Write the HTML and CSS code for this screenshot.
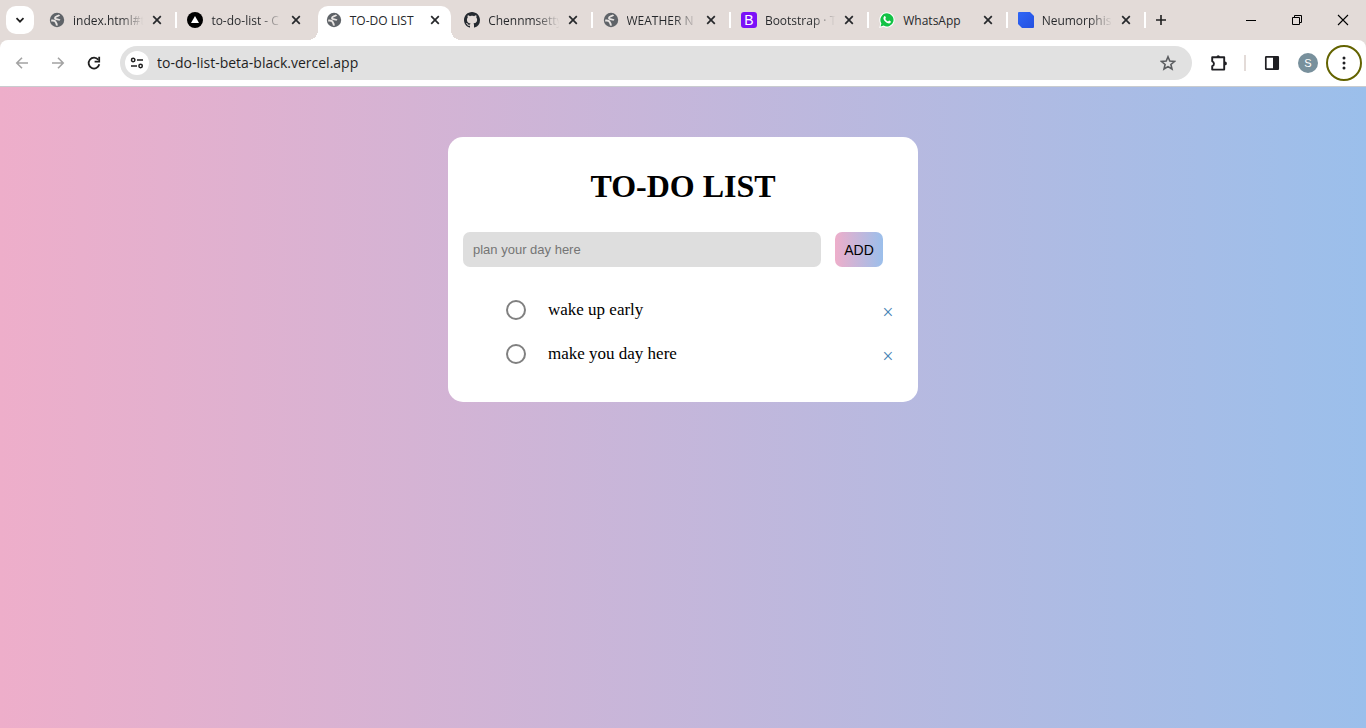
FILE: index.html
```html
<!DOCTYPE html>
<html lang="en">
<head>
<meta charset="utf-8">
<title>TO-DO LIST</title>
<link rel="stylesheet" href="styles.css">
</head>
<body>
<svg class="defs" aria-hidden="true">
  <symbol id="globe" viewBox="0 0 16 16">
    <circle cx="8" cy="8" r="7.200" fill="#5f6368"/>
    <path d="M10.300 2.800C9.500 4.500 6 3.800 6 6c0 2 4.800.6 5.200 2.800M2.200 8.500c2 .2 3.900-.2 4.300 1.300.3 1.300 1.500 1 1.300 3.800" fill="none" stroke="#e8e4e2" stroke-width="1.900"/>
    <path d="M11 7.800l2.700.2c0 2-1.200 3.800-2.600 4.700L9.800 10z" fill="#5f6368"/>
  </symbol>
  <symbol id="x" viewBox="0 0 16 16">
    <path d="M4.200 4.200l7.600 7.600M11.800 4.200l-7.600 7.600" stroke="#26282b" stroke-width="1.700" fill="none"/>
  </symbol>
</svg>
<div class="browser">
  <header class="tabstrip">
    <button class="tab-search" aria-label="Search tabs"><svg width="12" height="12" viewBox="0 0 12 12"><path d="M2.500 4.200L6 7.700l3.500-3.500" fill="none" stroke="#1f1f1f" stroke-width="1.700"/></svg></button>
    <div class="tabs">
      <div class="tab"><svg class="fav"><use href="#globe"/></svg><span class="title">index.html#t</span><button class="close" aria-label="Close tab"><svg class="fav"><use href="#x"/></svg></button></div>
      <div class="tab bare"><svg class="fav" viewBox="0 0 16 16"><circle cx="8" cy="8" r="8"/><path d="M8 4l4 7H4z" fill="#fff"/></svg><span class="title">to-do-list - C</span><button class="close" aria-label="Close tab"><svg class="fav"><use href="#x"/></svg></button></div>
      <div class="tab active"><svg class="fav"><use href="#globe"/></svg><span class="title">TO-DO LIST</span><button class="close" aria-label="Close tab"><svg class="fav"><use href="#x"/></svg></button></div>
      <div class="tab"><svg class="fav" viewBox="0 0 16 16"><path fill="#24292f" d="M8 0C3.580 0 0 3.580 0 8c0 3.540 2.290 6.530 5.470 7.590.4.070.55-.17.55-.38 0-.19-.01-.82-.01-1.490-2.010.37-2.530-.49-2.690-.94-.09-.23-.48-.94-.82-1.130-.28-.15-.68-.52-.01-.53.63-.01 1.080.58 1.230.82.72 1.210 1.870.87 2.330.66.070-.52.28-.87.510-1.070-1.780-.2-3.640-.89-3.640-3.950 0-.87.310-1.590.82-2.150-.08-.2-.36-1.020.080-2.120 0 0 .67-.21 2.200.82.640-.18 1.320-.27 2-.27s1.360.09 2 .27c1.530-1.040 2.200-.82 2.200-.82.440 1.100.160 1.920.080 2.120.510.560.82 1.270.82 2.150 0 3.070-1.870 3.750-3.650 3.950.290.25.540.73.540 1.480 0 1.070-.01 1.930-.01 2.200 0 .21.150.46.550.38A8.010 8.010 0 0 0 16 8c0-4.420-3.580-8-8-8z"/></svg><span class="title">Chennmsetty</span><button class="close" aria-label="Close tab"><svg class="fav"><use href="#x"/></svg></button></div>
      <div class="tab"><svg class="fav"><use href="#globe"/></svg><span class="title">WEATHER N</span><button class="close" aria-label="Close tab"><svg class="fav"><use href="#x"/></svg></button></div>
      <div class="tab"><span class="fav bootstrap" aria-hidden="true">B</span><span class="title">Bootstrap · T</span><button class="close" aria-label="Close tab"><svg class="fav"><use href="#x"/></svg></button></div>
      <div class="tab"><svg class="fav" viewBox="0 0 16 16"><path d="M8 .2A7.700 7.700 0 0 0 1.300 11.700L.2 15.900l4.300-1.100A7.700 7.700 0 1 0 8 .2z" fill="#fff"/><path d="M8 1.300a6.600 6.600 0 0 0-5.600 10.100l-.8 3 3-.8A6.600 6.600 0 1 0 8 1.300z" fill="#12c245"/><path d="M5.300 4.300c.5-.4.900-.2 1.100.3l.5 1.200c.1.500-.7 1-.6 1.200.6 1.200 1.500 1.900 2.700 2.400.3.100.8-1 1.200-.8l1.400.7c.5.300.1 1.400-.4 1.800-2.100 1.400-6.500-2-6.800-4.600 0-.9.300-1.700.9-2.200z" fill="#fff"/></svg><span class="title whole">WhatsApp</span><button class="close" aria-label="Close tab"><svg class="fav"><use href="#x"/></svg></button></div>
      <div class="tab"><svg class="fav" viewBox="0 0 16 16"><defs><linearGradient id="blue" x2="1" y2="1"><stop stop-color="#2f66f6"/><stop offset="1" stop-color="#2450e0"/></linearGradient></defs><path d="M1 0h11l4 4v11a1 1 0 0 1-1 1H4l-4-4V1a1 1 0 0 1 1-1z" fill="url(#blue)"/></svg><span class="title">Neumorphis</span><button class="close" aria-label="Close tab"><svg class="fav"><use href="#x"/></svg></button></div>
    </div>
    <button class="new-tab" aria-label="New tab"><svg width="16" height="16" viewBox="0 0 16 16"><path d="M8 3v10M3 8h10" stroke="#1f1f1f" stroke-width="1.600"/></svg></button>
    <div class="window-buttons">
      <button aria-label="Minimize"><svg width="12" height="12" viewBox="0 0 12 12"><path d="M1 6.500h10" stroke="#000"/></svg></button>
      <button aria-label="Restore"><svg width="12" height="12" viewBox="0 0 12 12"><path d="M1.500 3.500h7v7h-7zM3.500 3.500v-2h7v7h-2" fill="none" stroke="#000"/></svg></button>
      <button aria-label="Close"><svg width="12" height="12" viewBox="0 0 12 12"><path d="M1 1l10 10M11 1L1 11" stroke="#000" stroke-width="1.100"/></svg></button>
    </div>
  </header>
  <div class="toolbar">
    <nav class="nav">
      <button aria-label="Back"><svg width="16" height="16" viewBox="0 0 16 16"><path d="M14 8H3M8 2.800L2.800 8 8 13.200" fill="none" stroke="#a3a3a3" stroke-width="1.600"/></svg></button>
      <button aria-label="Forward"><svg width="16" height="16" viewBox="0 0 16 16"><path d="M2 8h11M8 2.800L13.200 8 8 13.200" fill="none" stroke="#a3a3a3" stroke-width="1.600"/></svg></button>
      <button aria-label="Reload"><svg width="16" height="16" viewBox="0 0 16 16"><path d="M13.300 9.300A5.400 5.400 0 1 1 12.300 4.800" fill="none" stroke="#1f1f1f" stroke-width="1.800"/><path d="M13.200 1.800v4.800H8.600" fill="none" stroke="#1f1f1f" stroke-width="1.800"/></svg></button>
    </nav>
    <div class="omnibox">
      <button class="site-info" aria-label="Site information"><svg width="14" height="14" viewBox="0 0 14 14" fill="none" stroke="#1f1f1f" stroke-width="1.500"><circle cx="3.200" cy="4" r="1.700"/><path d="M7 4h6M1 10h6"/><circle cx="10.600" cy="10" r="1.700"/></svg></button>
      <input class="url" type="text" aria-label="Address" value="to-do-list-beta-black.vercel.app">
      <button class="star" aria-label="Bookmark"><svg width="16" height="16" viewBox="0 0 16 16"><path d="M8 1.800l1.800 4.300 4.600.4-3.500 3 1.100 4.500L8 11.600 4 14l1.100-4.500-3.500-3 4.600-.4z" fill="none" stroke="#5a5c5f" stroke-width="1.600"/></svg></button>
    </div>
    <div class="actions">
      <button class="ext" aria-label="Extensions"><svg width="18" height="18" viewBox="0 0 18 18"><path d="M2.200 3.300h12v12.300h-12v-3.500c2.300-.6 2.300-4.200 0-4.800z" fill="none" stroke="#1f1f23" stroke-width="1.900" stroke-linejoin="round"/><path d="M6.500 3a1.700 1.700 0 0 1 3.400 0zM15 7.500a1.900 1.900 0 0 1 0 3.800z" fill="#1f1f23"/></svg></button>
      <span class="divider"></span>
      <button aria-label="Side panel"><svg width="16" height="16" viewBox="0 0 16 16"><rect x="1.800" y="1.800" width="12.400" height="12.400" rx=".5" fill="none" stroke="#1f1f23" stroke-width="1.700"/><path d="M9 1.500h5.500v13H9z" fill="#1f1f23"/></svg></button>
      <button class="profile" aria-label="Profile"><span class="avatar">S</span></button>
      <button class="menu" aria-label="Menu"><svg width="16" height="16" viewBox="0 0 16 16" fill="#1f1f23"><circle cx="8" cy="3" r="1.500"/><circle cx="8" cy="8" r="1.500"/><circle cx="8" cy="13" r="1.500"/></svg></button>
    </div>
  </div>
  <main class="page">
    <section class="card">
      <h1>TO-DO LIST</h1>
      <form class="add-form">
        <input class="task-input" type="text" placeholder="plan your day here" aria-label="New task">
        <button class="add" type="button">ADD</button>
      </form>
      <ul class="tasks">
        <li><input type="checkbox" id="task-1"><label for="task-1">wake up early</label><button class="remove" aria-label="Remove">×</button></li>
        <li><input type="checkbox" id="task-2"><label for="task-2">make you day here</label><button class="remove" aria-label="Remove">×</button></li>
      </ul>
    </section>
  </main>
</div>
</body>
</html>
```
FILE: styles.css
```css
* { box-sizing: border-box; }
body { margin: 0; }
button { border: 0; padding: 0; margin: 0; background: none; display: flex; align-items: center; justify-content: center; flex: none; }
svg { display: block; }
.defs { position: absolute; width: 0; height: 0; }

.browser {
  min-height: 100vh;
  display: flex;
  flex-direction: column;
  background: #e3dbd8;
  font-family: "Open Sans", "Noto Sans", sans-serif;
}

.tabstrip { display: flex; height: 40px; }
.tab-search { width: 28px; height: 28px; margin: 6px 4px 0 6px; border-radius: 10px; background: #fff; }
.tabs { display: grid; grid-template-columns: repeat(8, 1fr); flex: 0 1 1107px; min-width: 0; }
.tab { position: relative; display: flex; align-items: center; min-width: 0; padding: 0 11px; }
.tab::after { content: ""; position: absolute; right: -1px; top: 12px; width: 2px; height: 16px; background: #fff; }
.tab.bare::after { display: none; }
.fav { width: 16px; height: 16px; flex: none; }
.bootstrap { display: flex; align-items: center; justify-content: center; border-radius: 3px; background: #7b11f8; color: #fff; font: 14px "Liberation Sans", sans-serif; }
.title {
  flex: 1;
  min-width: 0;
  margin: 0 4px 0 8px;
  padding-top: 1px;
  white-space: nowrap;
  font-size: 12px;
  line-height: 20px;
  color: transparent;
  background: linear-gradient(90deg, #26282b 65%, #26282b00 98%);
  -webkit-background-clip: text;
  background-clip: text;
}
.active .title, .title.whole { color: #26282b; background: none; }
.tab.active { margin: 6px 2px 0 3px; padding: 0 8px 6px 8px; border-radius: 10px 10px 0 0; background: #fff; }
.tab.active::before, .tab.active::after { content: ""; position: absolute; top: auto; bottom: 0; width: 10px; height: 10px; }
.tab.active::before { left: -10px; background: radial-gradient(circle at 0 0, transparent 10px, #fff 10px); }
.tab.active::after { right: -10px; background: radial-gradient(circle at 100% 0, transparent 10px, #fff 10px); }
.new-tab { width: 28px; margin-left: 2px; }
.window-buttons { display: flex; margin-left: auto; }
.window-buttons button { width: 46px; }

.toolbar {
  display: flex;
  align-items: center;
  height: 47px;
  padding: 0 4px;
  border-bottom: 1px solid #c9cccf;
  border-radius: 8px 8px 0 0;
  background: #fff;
}
.nav { display: flex; margin-right: 8px; }
.nav button { width: 36px; height: 36px; }
.omnibox { display: flex; align-items: center; flex: 1; height: 34px; padding: 0 12px 0 5px; border-radius: 17px; background: #e1e1e1; }
.site-info { width: 24px; height: 24px; border-radius: 50%; background: #fff; }
.url { flex: 1; min-width: 0; margin: 0 8px; padding: 0; border: 0; outline: 0; background: none; color: #1f1f1f; font: 14px/20px "Open Sans", "Noto Sans", sans-serif; }
.star { width: 24px; height: 24px; }
.actions { display: flex; align-items: center; margin-left: 9px; }
.actions button { width: 36px; height: 36px; }
.divider { width: 2px; height: 16px; margin: 0 8px 0 7px; background: #e3dbd8; }
.avatar { width: 20px; height: 20px; border-radius: 50%; background: #78909c; color: #fff; font-size: 11px; line-height: 20px; text-align: center; }
.actions .menu { border: 2px solid #636300; border-radius: 50%; }

.page { flex: 1; padding: 50px 16px; background: linear-gradient(90deg, #eeaeca, #9bbfeb); }
.card {
  max-width: 470px;
  margin: 0 auto;
  padding: 31px 15px 26px;
  border-radius: 15px;
  background: #fff;
  font-family: "Liberation Serif", serif;
}
h1 { margin: 0 0 27px; font-size: 32px; line-height: 37px; text-align: center; color: #000; }
.add-form { display: flex; gap: 14px; padding-right: 20px; }
.task-input { flex: 1; min-width: 0; height: 35px; padding: 0 10px; border: 0; border-radius: 7px; background: #dedede; font: 13px "Liberation Sans", sans-serif; }
.task-input::placeholder { color: #757575; }
.add { width: 48px; height: 35px; border-radius: 7px; background: linear-gradient(90deg, #eeaeca, #9bbfeb); color: #000; font: 14px "Liberation Sans", sans-serif; }
.tasks { margin: 21px 0 0; padding: 0 0 0 43px; list-style: none; }
.tasks li { display: flex; align-items: center; height: 44px; }
.tasks input { appearance: none; width: 20px; height: 20px; margin: 0 22px 0 0; border: 2px solid #808080; border-radius: 50%; }
.tasks input:checked { background: #808080; }
.tasks label { flex: 1; font-size: 17px; line-height: 20px; color: #000; }
.remove { width: 30px; height: 30px; padding-top: 4px; color: #4682b4; font: 20px "Liberation Serif", serif; }
```
